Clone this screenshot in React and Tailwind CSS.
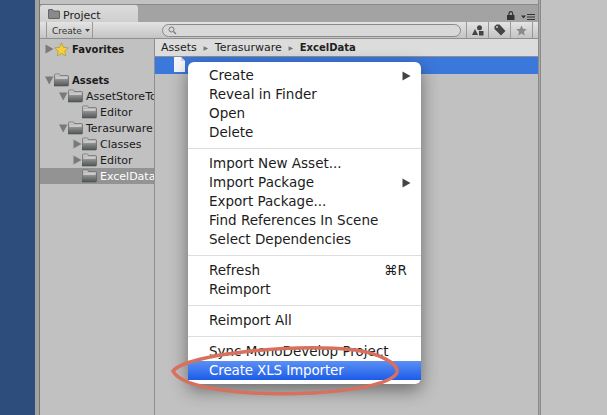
import { useState } from 'react';

const FONT = { fontFamily: '"DejaVu Sans", sans-serif' };

const Triangle = ({ open }) => (
  <svg width="9" height="10" viewBox="0 0 9 10" className="shrink-0">
    {open ? <path d="M0 1.500h8.500L4.200 9.500z" fill="#7a7a7a" /> : <path d="M0.500 0.500v9L8.500 5z" fill="#7a7a7a" />}
  </svg>
);

const Folder = () => (
  <svg width="15" height="14" viewBox="0 0 15 14" className="shrink-0">
    <defs>
      <linearGradient id="folderBody" x1="0" y1="0" x2="0" y2="1">
        <stop offset="0" stopColor="#d8d8d8" />
        <stop offset="0.5" stopColor="#8a8a8a" />
        <stop offset="1" stopColor="#4f5555" />
      </linearGradient>
    </defs>
    <path d="M0.500 3V2q0-1 1-1h4l1 1.500h7q1 0 1 1V12q0 1-1 1h-13q-1 0-1-1z" fill="url(#folderBody)" stroke="#555" strokeWidth="0.600" />
    <path d="M1.500 5h12" stroke="#eee" strokeWidth="1" />
  </svg>
);

const Star = () => (
  <svg width="15" height="15" viewBox="0 0 24 24" className="shrink-0">
    <path d="M12 1.500l3.200 7 7.600.9-5.600 5.200 1.500 7.600L12 18.400l-6.700 3.800 1.500-7.600L1.200 9.400l7.600-.9z" fill="#f6cf3c" stroke="#a98d2a" strokeWidth="1" />
  </svg>
);

const TreeRow = ({ label, indent, arrow, icon, selected, bold }) => (
  <div
    className={`flex h-4 items-center leading-none whitespace-nowrap overflow-hidden ${selected ? 'bg-[#939393] text-white' : 'text-[#1a1a1a]'} ${bold ? 'font-bold text-[10px]' : 'text-[11px]'}`}
    style={{ paddingLeft: indent }}
  >
    <span className="flex w-[9px] shrink-0 items-center">
      {arrow === 'open' && <Triangle open />}
      {arrow === 'closed' && <Triangle />}
    </span>
    {icon === 'star' ? <Star /> : <Folder />}
    <span className={`ml-[3px] ${bold ? 'pt-[2px]' : ''}`}>{label}</span>
  </div>
);

const MenuItem = ({ label, shortcut, arrow, active }) => (
  <div
    className={`flex h-[19px] items-center pl-[21px] pr-[10px] text-[13.500px] leading-none whitespace-nowrap ${active ? 'bg-gradient-to-b from-[#5b8ff5] to-[#1b5be8] text-white tracking-[-0.150px]' : 'text-[#1c1c1c]'}`}
  >
    <span className="flex-1">{label}</span>
    {shortcut && <span className="mr-[4px]">{shortcut}</span>}
    {arrow && (
      <svg width="9" height="10" viewBox="0 0 9 10">
        <path d="M0.500 0.500v9L8.500 5z" fill="#444" />
      </svg>
    )}
  </div>
);

const MenuSep = () => <div className="mb-[5px] mt-[6px] h-px bg-[#dedede]" />;

const ToolButton = ({ children }) => (
  <div className="flex h-full w-[22px] shrink-0 items-center justify-center border-l border-[#999]">{children}</div>
);

export default function App() {
  const [selected] = useState('ExcelData');

  return (
    <div className="relative flex h-[415px] w-[607px] overflow-hidden bg-[#c1c1c1]" style={FONT}>
      <div className="w-[35px] shrink-0 bg-[#2d4d7d]" />
      <div className="w-[5px] shrink-0 border-r border-[#757575] bg-[#a2a2a2]" />

      {/* Project panel */}
      <div className="flex w-[498px] shrink-0 flex-col bg-[#c1c1c1]">
        <div className="h-[5px] shrink-0 border-b border-[#8a8a8a] bg-[#c2c2c2]" />
        <div className="flex h-[17px] shrink-0 items-end justify-between bg-[#a3a3a3] pr-[3px]">
          <div className="flex h-[17px] w-[98px] items-center gap-[3px] rounded-t-[3px] bg-gradient-to-b from-[#dcdcdc] to-[#cfcfcf] pl-[8px] pt-[3px] text-[11px] leading-none text-[#222]">
            <svg width="12" height="10" viewBox="0 0 12 10" className="-mt-[3px]">
              <path d="M0.500 2V1q0-.5.5-.5h3.500l1 1.500H11q.5 0 .5.5V9q0 .5-.5.5H1Q.5 9.500.5 9z" fill="#8a8a8a" stroke="#444" strokeWidth="0.700" />
            </svg>
            Project
          </div>
          <div className="flex items-end gap-[6px] pb-[2px]">
            <svg width="8" height="9" viewBox="0 0 8 9">
              <path d="M2 4V2.500a1.800 1.800 0 0 1 3.600 0V4" fill="none" stroke="#333" strokeWidth="1.200" />
              <rect x="0" y="4" width="7.500" height="5" fill="#333" />
            </svg>
            <svg width="14" height="6" viewBox="0 0 14 6">
              <path d="M0 1.500h5L2.500 4.500z" fill="#333" />
              <path d="M6 0.500h8M6 3h8M6 5.500h8" stroke="#333" strokeWidth="1" />
            </svg>
          </div>
        </div>

        <div className="flex h-[17px] shrink-0 items-center border-b border-[#8f8f8f] bg-gradient-to-b from-[#e4e4e4] to-[#c4c4c4] pl-[6px]">
          <div className="flex h-full w-[47px] shrink-0 items-center border-x border-[#999] pl-[5px] pt-[3px] text-[9px] leading-none text-[#333]">
            Create
            <svg width="5" height="3" viewBox="0 0 5 3" className="ml-[3px] -mt-[3px]">
              <path d="M0 0h5L2.500 3z" fill="#444" />
            </svg>
          </div>
          <div className="ml-[69px] mr-[5px] flex h-[13px] flex-1 items-center rounded-full border border-[#8a8a8a] bg-[#d8d8d8] pl-[5px]">
            <svg width="9" height="9" viewBox="0 0 9 9">
              <circle cx="3.500" cy="3.500" r="2.500" fill="none" stroke="#777" />
              <path d="M5.500 5.500L8 8" stroke="#777" strokeWidth="1.200" />
            </svg>
          </div>
          <ToolButton>
            <svg width="12" height="11" viewBox="0 0 12 11">
              <circle cx="7.500" cy="2.800" r="2.500" fill="#444" />
              <path d="M3 4L6 10H0z" fill="#444" />
              <rect x="7" y="6" width="4.500" height="4.500" fill="#444" />
            </svg>
          </ToolButton>
          <ToolButton>
            <svg width="12" height="12" viewBox="0 0 12 12">
              <path d="M0.500 2.500L2.500 0.500h3L11.500 7 7 11.500 0.500 5z" fill="#444" />
              <circle cx="3" cy="3" r="0.900" fill="#ddd" />
            </svg>
          </ToolButton>
          <ToolButton>
            <svg width="11" height="11" viewBox="0 0 24 24">
              <path d="M12 1l3.400 7.400 8 .9-6 5.400 1.700 8L12 18.700l-7.100 4 1.700-8-6-5.400 8-.9z" fill="#8a8a8a" />
            </svg>
          </ToolButton>
          <div className="h-full w-[6px] shrink-0 border-l border-[#999]" />
        </div>

        <div className="flex min-h-0 flex-1">
          {/* Folder tree */}
          <div className="w-[115px] shrink-0 overflow-hidden border-r border-[#8f8f8f] pt-[2px]">
            <TreeRow label="Favorites" indent={5} arrow="closed" icon="star" bold />
            <div className="h-[15px]" />
            <TreeRow label="Assets" indent={5} arrow="open" bold />
            <TreeRow label="AssetStoreTools" indent={19} arrow="open" />
            <TreeRow label="Editor" indent={33} />
            <TreeRow label="Terasurware" indent={19} arrow="open" />
            <TreeRow label="Classes" indent={33} arrow="closed" />
            <TreeRow label="Editor" indent={33} arrow="closed" />
            <TreeRow label={selected} indent={33} selected />
          </div>

          {/* Asset list */}
          <div className="min-w-0 flex-1">
            <div className="flex h-[18px] items-center border-b border-[#8f8f8f] bg-[#dcdcdc] pl-[6px] text-[11px] leading-none text-[#222]">
              <span>Assets</span>
              <span className="w-[18px] text-center text-[6px] text-[#777]">▶</span>
              <span>Terasurware</span>
              <span className="w-[18px] text-center text-[6px] text-[#777]">▶</span>
              <span className="text-[10px] font-bold">ExcelData</span>
            </div>
            <div className="flex h-[17px] items-start bg-[#3b78dc] pl-[19px]">
              <svg width="11" height="15" viewBox="0 0 11 15">
                <path d="M0 0h7l4 4v11H0z" fill="#f4f6fa" />
                <path d="M7 0v4h4z" fill="#cfd6e4" />
              </svg>
            </div>
          </div>
        </div>
      </div>

      <div className="w-[3px] shrink-0 border-x border-[#8a8a8a] bg-[#a8a8a8]" />
      <div className="flex-1 bg-[#c2c2c2]" />

      {/* Context menu */}
      <div className="absolute left-[188px] top-[62px] w-[233px] rounded-[6px] bg-white pb-[4px] pt-[4px] shadow-[0_6px_18px_rgba(0,0,0,0.45)]">
        <MenuItem label="Create" arrow />
        <MenuItem label="Reveal in Finder" />
        <MenuItem label="Open" />
        <MenuItem label="Delete" />
        <MenuSep />
        <MenuItem label="Import New Asset..." />
        <MenuItem label="Import Package" arrow />
        <MenuItem label="Export Package..." />
        <MenuItem label="Find References In Scene" />
        <MenuItem label="Select Dependencies" />
        <MenuSep />
        <MenuItem label="Refresh" shortcut="⌘R" />
        <MenuItem label="Reimport" />
        <MenuSep />
        <MenuItem label="Reimport All" />
        <MenuSep />
        <MenuItem label="Sync MonoDevelop Project" />
        <MenuItem label="Create XLS Importer" active />
      </div>

      {/* Annotation circled round the last item */}
      <svg className="pointer-events-none absolute left-[165px] top-[340px]" width="245" height="60" viewBox="0 0 245 60">
        <path
          d="M8 31C22 14 130 3 190 10c24 3 44 14 42 22c-3 10-34 18-85 21c-58 3-130-3-139-22z"
          fill="none"
          stroke="#d8705e"
          strokeWidth="3.500"
        />
      </svg>
    </div>
  );
}
